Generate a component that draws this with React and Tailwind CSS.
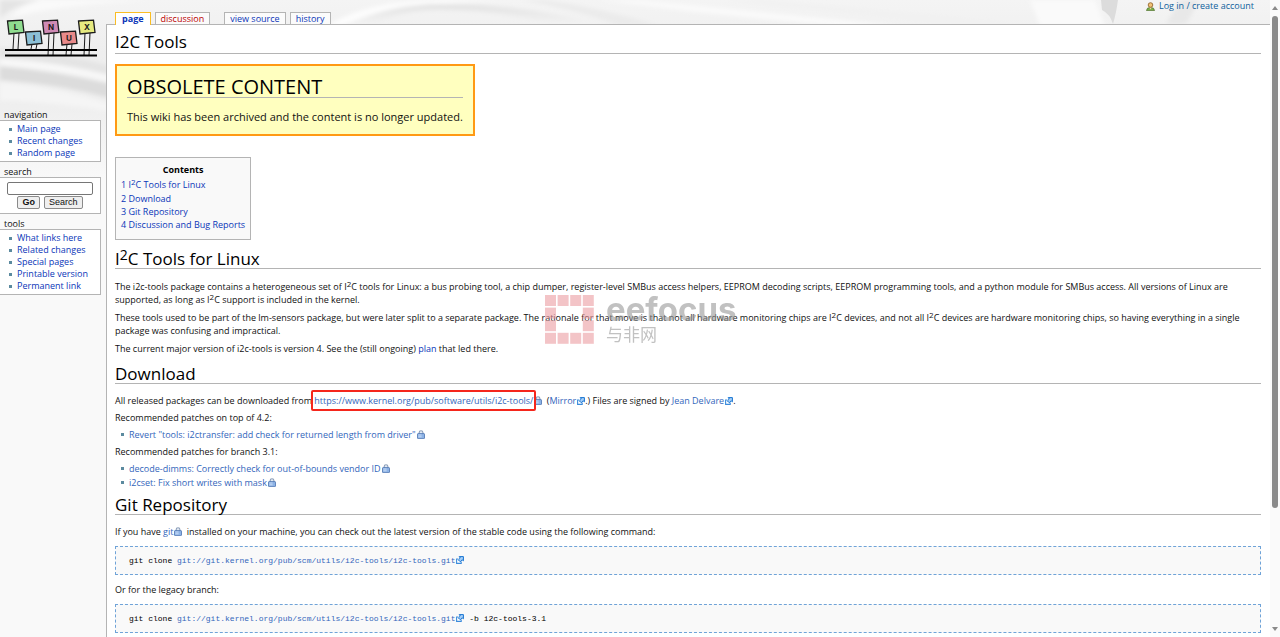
const NAV_LINKS = ["Main page", "Recent changes", "Random page"];
const TOOL_LINKS = [
  "What links here",
  "Related changes",
  "Special pages",
  "Printable version",
  "Permanent link",
];

const I2C = () => (
  <>
    I<sup className="text-[8px] -top-[3px]">2</sup>C
  </>
);

function Backdrop() {
  return (
    <svg
      className="absolute inset-x-0 top-0 -z-10 w-full h-[180px]"
      viewBox="0 0 1280 180"
      preserveAspectRatio="none"
      aria-hidden="true"
    >
      <defs>
        <linearGradient id="fade" x1="0" y1="0" x2="0" y2="1">
          <stop offset="0" stopColor="#f4f4f4" />
          <stop offset="0.3" stopColor="#eeeeee" />
          <stop offset="0.6" stopColor="#efefef" />
          <stop offset="1" stopColor="#f9f9f9" />
        </linearGradient>
        <linearGradient id="wave" x1="0" y1="0" x2="0" y2="1">
          <stop offset="0" stopColor="#e2e2e2" />
          <stop offset="1" stopColor="#f4f4f4" />
        </linearGradient>
        <filter id="soft">
          <feGaussianBlur stdDeviation="2" />
        </filter>
      </defs>
      <rect width="1280" height="180" fill="url(#fade)" />
      <g filter="url(#soft)">
        <path d="M0 0H40Q16 4 0 18Z" fill="#e4e4e4" />
        <path d="M40 0H150Q60 4 10 18Q20 6 40 0Z" fill="#fafafa" />
        <path d="M0 48Q60 52 110 66V74Q50 62 0 58Z" fill="#e4e4e4" />
        <path d="M0 58Q60 62 110 76V82Q60 70 0 66Z" fill="#f8f8f8" />
        <path d="M0 66Q60 72 110 84V98Q60 84 0 80Z" fill="#dcdcdc" />
        <path d="M0 82Q60 88 110 104V112Q60 102 0 100Z" fill="#f5f5f5" />
        <path d="M326 26Q370 0 440 0H500Q400 4 340 26Z" fill="#fdfdfd" />
        <path d="M342 26Q390 4 440 4Q530 4 600 26H560Q500 10 440 10Q400 10 368 26Z" fill="url(#wave)" />
        <path d="M520 0H545Q600 8 660 26H620Q580 10 520 0Z" fill="#ebebeb" />
        <path d="M640 0L900 26H840Q720 16 600 0Z" fill="#fafafa" />
        <path d="M760 0L1010 22V26H960Q860 14 720 0Z" fill="#f1f1f1" />
        <path d="M1030 0H1095L1105 26H1040Z" fill="#fafafa" />
        <path d="M1180 0H1200L1186 24H1166Z" fill="#e8e8e8" />
      </g>
      <path d="M1101 0H1118Q1116 14 1113 24Q1110 14 1102 10Z" fill="#dcdcdc" />
    </svg>
  );
}

function Logo() {
  const signs = [
    { letter: "L", x: 8, y: 21, fill: "#8fdc8f", foot: 49 },
    { letter: "I", x: 26, y: 32, fill: "#8cc0d6", foot: 49 },
    { letter: "N", x: 43, y: 21, fill: "#cf8ab4", foot: 55 },
    { letter: "U", x: 61, y: 32, fill: "#e88a8a", foot: 55 },
    { letter: "X", x: 79, y: 21, fill: "#e6ea80", foot: 55 },
  ];
  return (
    <svg className="block w-full h-[60px]" viewBox="0 0 106 60" preserveAspectRatio="xMinYMin meet" aria-label="Linux">
      {signs.map((s) => (
        <g key={s.letter} stroke="#1b1b1b" strokeWidth="1">
          <path d={`M${s.x + 6} ${s.y + 12}L${s.x + 5} ${s.foot}M${s.x + 11} ${s.y + 12}L${s.x + 10} ${s.foot}`} />
          <path
            d={`M${s.x - 0.5} ${s.y}L${s.x + 14.5} ${s.y - 0.8}L${s.x + 16} ${s.y + 11.5}L${s.x + 1} ${s.y + 13}Z`}
            fill={s.fill}
            strokeWidth="1.3"
          />
          <text
            x={s.x + 8}
            y={s.y + 9}
            textAnchor="middle"
            fontSize="8"
            fontWeight="bold"
            fontFamily="Inter, sans-serif"
            stroke="none"
            fill="#1b1b1b"
          >
            {s.letter}
          </text>
        </g>
      ))}
      <path d="M5 50H97M5 55.5H97" stroke="#000" strokeWidth="1.8" />
    </svg>
  );
}

const LockIcon = () => (
  <svg className="inline-block w-[8px] h-[9px] align-[-1px] ml-px mr-[2px]" viewBox="0 0 8 9" aria-hidden="true">
    <path d="M2.2 4V2.4Q2.2 .7 4 .7Q5.9 .7 5.9 2.4V4" fill="#e3ebf5" stroke="#8b9db8" strokeWidth="1.1" />
    <rect x=".5" y="3.6" width="7" height="5" rx=".6" fill="#8db3e6" stroke="#4a72b0" strokeWidth=".8" />
    <path d="M1.4 5H4.6M1.4 6.8H4.6" stroke="#d9e7fa" strokeWidth=".8" />
  </svg>
);

const ExternalIcon = () => (
  <svg className="inline-block w-[8px] h-[8px] align-[-1px] ml-px" viewBox="0 0 8 8" aria-hidden="true">
    <path d="M2.4 3H.6V7.4H5.2V5.6" fill="#fff" stroke="#3b8bdc" strokeWidth="1.1" />
    <path d="M3.2 .6H7.4V4.8L6.1 3.8L4.2 5.7L2.4 3.9L4.3 2Z" fill="#a8d0f8" stroke="#1673d1" strokeWidth="1" />
  </svg>
);

function Link({ children, icon }) {
  return (
    <a href="#" className={icon ? "text-[#3366bb]" : "text-[#0a36b8]"}>
      {children}
      {icon === "lock" && <LockIcon />}
      {icon === "ext" && <ExternalIcon />}
    </a>
  );
}

function Tab({ children, className }) {
  return (
    <li className={`border border-b-0 ${className}`}>
      <a href="#">{children}</a>
    </li>
  );
}

function Portlet({ title, children }) {
  return (
    <section className="mb-[4px]">
      <h5 className="pl-1 h-[11px] leading-[12px]">{title}</h5>
      <div className="border border-l-0 border-[#b4b4b4] bg-white w-[101px]">{children}</div>
    </section>
  );
}

function LinkList({ items }) {
  return (
    <ul className="py-[2px] pl-[9px] leading-[12px]">
      {items.map((item) => (
        <li key={item} className="flex items-center gap-[5px]">
          <span className="size-[3px] bg-[#5b8a9f]" />
          <Link>{item}</Link>
        </li>
      ))}
    </ul>
  );
}

function Bullet({ children }) {
  return (
    <li className="flex items-center gap-[5px] pl-[6px]">
      <span className="size-[3px] bg-[#5b8a9f]" />
      <span>{children}</span>
    </li>
  );
}

function Heading({ children }) {
  return (
    <h2 className="border-b border-[#b4b4b4] text-[17px] leading-[18px] text-black">{children}</h2>
  );
}

function Pre({ children }) {
  return (
    <pre className="border border-dashed border-[#6fa3d8] bg-[#f9f9f9] px-[13px] py-[7px] text-[8px] leading-[13px] font-['Liberation_Mono',monospace] text-black">
      {children}
    </pre>
  );
}

function Watermark() {
  const cells = Array.from({ length: 16 }, (_, i) => i).filter((i) => ![5, 6, 9, 10].includes(i));
  return (
    <div className="absolute left-[438px] top-[270px] flex gap-[12px] opacity-60 pointer-events-none">
      <svg className="w-[49px] h-[49px]" viewBox="0 0 49 49" aria-hidden="true">
        {cells.map((i) => (
          <rect key={i} x={(i % 4) * 12.6} y={Math.floor(i / 4) * 12.6} width="11" height="11" fill="#ec9da2" />
        ))}
      </svg>
      <div className="text-[#999]">
        <div className="font-['Inter',sans-serif] font-bold text-[33px] leading-[28px]">eefocus</div>
        <div className="font-['Noto_Sans_CJK_SC',sans-serif] text-[17px] leading-[22px]">与非网</div>
      </div>
    </div>
  );
}

function Scrollbar() {
  return (
    <div className="w-[10px] shrink-0 bg-[#fafafa] flex flex-col items-center" aria-hidden="true">
      <svg className="w-[6px] h-[16px]" viewBox="0 0 6 16">
        <path d="M3 6L6 10H0Z" fill="#8a8a8a" />
      </svg>
      <div className="w-[6px] grow-[492] rounded-full bg-[#8a8a8a]" />
      <div className="grow-[116]" />
      <svg className="w-[6px] h-[13px]" viewBox="0 0 6 13">
        <path d="M0 3H6L3 7Z" fill="#8a8a8a" />
      </svg>
    </div>
  );
}

export default function App() {
  return (
    <div className="relative isolate flex min-h-screen bg-[#f9f9f9] font-['Open_Sans',sans-serif] text-[9px] text-[#111]">
      <Backdrop />

      {/* Sidebar */}
      <aside className="w-[106px] shrink-0">
        <a href="#" className="block h-[109px]">
          <Logo />
        </a>
        <Portlet title="navigation">
          <LinkList items={NAV_LINKS} />
        </Portlet>
        <Portlet title="search">
          <form className="flex flex-wrap justify-center gap-x-[4px] px-[7px] py-[4px] font-['Liberation_Sans',sans-serif]">
            <input
              type="text"
              aria-label="Search"
              className="w-full h-[13px] border border-[#767676] rounded-[2px] bg-white px-1"
            />
            <button type="button" className="mt-px h-[13px] px-[4px] leading-[11px] border border-[#8a8a8a] rounded-[2px] bg-[#efefef] font-bold">
              Go
            </button>
            <button type="button" className="mt-px h-[13px] px-[4px] leading-[11px] border border-[#8a8a8a] rounded-[2px] bg-[#efefef]">
              Search
            </button>
          </form>
        </Portlet>
        <Portlet title="tools">
          <LinkList items={TOOL_LINKS} />
        </Portlet>
      </aside>

      {/* Page column */}
      <div className="flex-1 min-w-0 flex flex-col">
        <header className="flex h-[24px] items-end justify-between pl-[9px] pr-[16px]">
          <ul className="relative z-10 flex items-end gap-[4px] leading-[12px] text-[#0a36b8]">
            <Tab className="h-[13px] -mb-px px-[6px] border-[#fabd23] bg-white font-bold">page</Tab>
            <Tab className="h-[12px] px-[5px] border-[#b4b4b4] bg-[#fbfbfb] text-[#ba0000] mr-[10px]">discussion</Tab>
            <Tab className="h-[12px] px-[5px] border-[#b4b4b4] bg-[#fbfbfb]">view source</Tab>
            <Tab className="h-[12px] px-[5px] border-[#b4b4b4] bg-[#fbfbfb]">history</Tab>
          </ul>
          <a href="#" className="self-start flex items-center gap-[4px] leading-[12px] text-[#0f5f9c]">
            <svg className="w-[9px] h-[9px]" viewBox="0 0 9 9" aria-hidden="true">
              <path d="M.5 8.6Q.6 5.4 4.5 5.4Q8.4 5.4 8.5 8.6Z" fill="#7db04a" stroke="#4b6e28" strokeWidth=".7" />
              <path d="M3.2 5.2L4.5 7.4L5.8 5.2Z" fill="#f3d9a8" />
              <circle cx="4.5" cy="3" r="2.3" fill="#f0c277" stroke="#8a5a1e" strokeWidth=".8" />
            </svg>
            Log in / create account
          </a>
        </header>

        <main className="relative flex-1 border-t border-l border-[#b4b4b4] bg-white pl-[8px] pr-[9px] leading-[13px]">
          <h1 className="mt-[6px] border-b border-[#b4b4b4] text-[17px] leading-[22px] text-black">I2C Tools</h1>

          <div className="mt-[10px] w-fit border-2 border-[#ff9914] bg-[#ffffbf] px-[10px] pt-[10px] pb-[9px]">
            <h2 className="border-b border-[#b4b4b4] text-[20px] leading-[21px] text-black">OBSOLETE CONTENT</h2>
            <p className="mt-[11px] text-[11px] leading-[16px]">
              This wiki has been archived and the content is no longer updated.
            </p>
          </div>

          <nav className="mt-[21px] w-fit border border-[#b4b4b4] bg-[#f9f9f9] px-[5px] pt-[5px] pb-[8px]">
            <h2 className="text-center font-bold text-black leading-[14px]">Contents</h2>
            <ol className="mt-px">
              <li className="mb-px"><Link>1 <I2C /> Tools for Linux</Link></li>
              <li><Link>2 Download</Link></li>
              <li><Link>3 Git Repository</Link></li>
              <li><Link>4 Discussion and Bug Reports</Link></li>
            </ol>
          </nav>

          <div className="mt-[10px]">
            <Heading>
              I<sup className="text-[14px] -top-[5px]">2</sup>C Tools for Linux
            </Heading>
          </div>
          <p className="mt-[11px]">
            The i2c-tools package contains a heterogeneous set of <I2C /> tools for Linux: a bus probing tool, a chip
            dumper, register-level SMBus access helpers, EEPROM decoding scripts, EEPROM programming tools, and a
            python module for SMBus access. All versions of Linux are supported, as long as <I2C /> support is
            included in the kernel.
          </p>
          <p className="mt-[5px]">
            These tools used to be part of the lm-sensors package, but were later split to a separate package. The
            rationale for that move is that not all hardware monitoring chips are <I2C /> devices, and not all{" "}
            <I2C /> devices are hardware monitoring chips, so having everything in a single package was confusing and
            impractical.
          </p>
          <p className="mt-[5px]">
            The current major version of i2c-tools is version 4. See the (still ongoing) <Link>plan</Link> that led
            there.
          </p>

          <div className="mt-[10px]">
            <Heading>Download</Heading>
          </div>
          <p className="mt-[10px]">
            All released packages can be downloaded from{" "}
            <span className="relative">
              <Link icon="lock">https://www.kernel.org/pub/software/utils/i2c-tools/</Link>
              <span className="absolute -left-[3px] right-[8px] -top-[4px] -bottom-[4px] rounded-[2px] border-2 border-[#f5261c]" />
            </span>{" "}
            (<Link icon="ext">Mirror</Link>.) Files are signed by <Link icon="ext">Jean Delvare</Link>.
          </p>
          <p className="mt-[4px]">Recommended patches on top of 4.2:</p>
          <ul className="mt-[4px]">
            <Bullet>
              <Link icon="lock">Revert "tools: i2ctransfer: add check for returned length from driver"</Link>
            </Bullet>
          </ul>
          <p className="mt-[4px]">Recommended patches for branch 3.1:</p>
          <ul className="mt-[4px] flex flex-col gap-px">
            <Bullet>
              <Link icon="lock">decode-dimms: Correctly check for out-of-bounds vendor ID</Link>
            </Bullet>
            <Bullet>
              <Link icon="lock">i2cset: Fix short writes with mask</Link>
            </Bullet>
          </ul>

          <div className="mt-[7px]">
            <Heading>Git Repository</Heading>
          </div>
          <p className="mt-[10px] mb-[8px]">
            If you have <Link icon="lock">git</Link> installed on your machine, you can check out the latest version of
            the stable code using the following command:
          </p>
          <Pre>
            git clone <Link icon="ext">git://git.kernel.org/pub/scm/utils/i2c-tools/i2c-tools.git</Link>
          </Pre>
          <p className="my-[8px]">Or for the legacy branch:</p>
          <Pre>
            git clone <Link icon="ext">git://git.kernel.org/pub/scm/utils/i2c-tools/i2c-tools.git</Link> -b
            i2c-tools-3.1
          </Pre>

          <Watermark />
        </main>
      </div>

      <Scrollbar />
    </div>
  );
}
